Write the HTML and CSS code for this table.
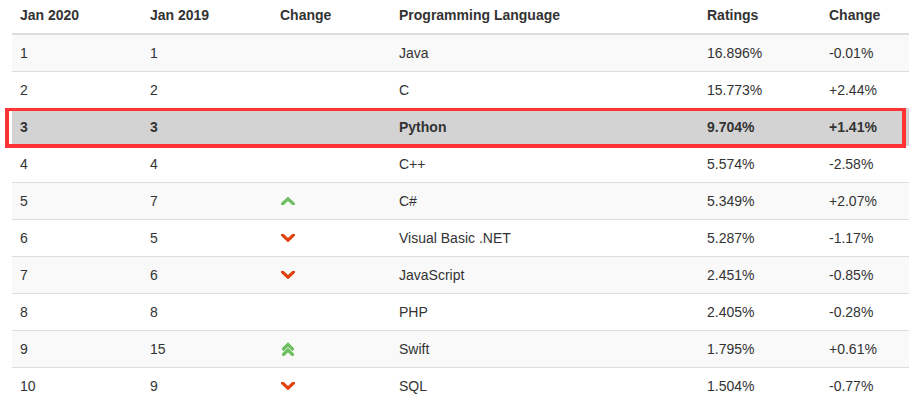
FILE: index.html
```html
<!DOCTYPE html>
<html lang="en">
<head>
    <meta charset="UTF-8">
    <title>TIOBE Index - January 2020</title>
    <link rel="stylesheet" href="styles.css">
</head>
<body>
    <div class="ranking">
        <table class="table table-striped">
            <colgroup>
                <col class="col-rank">
                <col class="col-rank">
                <col class="col-trend">
                <col class="col-lang">
                <col class="col-rating">
                <col>
            </colgroup>
            <thead>
                <tr>
                    <th>Jan 2020</th>
                    <th>Jan 2019</th>
                    <th>Change</th>
                    <th>Programming Language</th>
                    <th>Ratings</th>
                    <th>Change</th>
                </tr>
            </thead>
            <tbody>
                <tr><td>1</td><td>1</td><td></td><td>Java</td><td>16.896%</td><td>-0.01%</td></tr>
                <tr><td>2</td><td>2</td><td></td><td>C</td><td>15.773%</td><td>+2.44%</td></tr>
                <tr class="highlight"><td>3</td><td>3</td><td></td><td>Python</td><td>9.704%</td><td>+1.41%</td></tr>
                <tr><td>4</td><td>4</td><td></td><td>C++</td><td>5.574%</td><td>-2.58%</td></tr>
                <tr>
                    <td>5</td><td>7</td>
                    <td><svg class="trend up" viewBox="0 0 14 8"><path d="M1.5 7 L7 1.8 L12.5 7"/></svg></td>
                    <td>C#</td><td>5.349%</td><td>+2.07%</td>
                </tr>
                <tr>
                    <td>6</td><td>5</td>
                    <td><svg class="trend down" viewBox="0 0 14 8"><path d="M1.5 1 L7 6.2 L12.5 1"/></svg></td>
                    <td>Visual Basic .NET</td><td>5.287%</td><td>-1.17%</td>
                </tr>
                <tr>
                    <td>7</td><td>6</td>
                    <td><svg class="trend down" viewBox="0 0 14 8"><path d="M1.5 1 L7 6.2 L12.5 1"/></svg></td>
                    <td>JavaScript</td><td>2.451%</td><td>-0.85%</td>
                </tr>
                <tr><td>8</td><td>8</td><td></td><td>PHP</td><td>2.405%</td><td>-0.28%</td></tr>
                <tr>
                    <td>9</td><td>15</td>
                    <td><svg class="trend up double" viewBox="0 0 12 14"><path d="M1.5 7 L6 2.5 L10.5 7"/><path d="M1.5 12.5 L6 8 L10.5 12.5"/></svg></td>
                    <td>Swift</td><td>1.795%</td><td>+0.61%</td>
                </tr>
                <tr>
                    <td>10</td><td>9</td>
                    <td><svg class="trend down" viewBox="0 0 14 8"><path d="M1.5 1 L7 6.2 L12.5 1"/></svg></td>
                    <td>SQL</td><td>1.504%</td><td>-0.77%</td>
                </tr>
            </tbody>
        </table>
        <div class="marker"></div>
    </div>
</body>
</html>
```

FILE: styles.css
```css
* {
    box-sizing: border-box;
}

body {
    margin: 0;
    background: #ffffff;
    color: #333333;
    font-family: 'Liberation Sans', Arial, sans-serif;
    font-size: 14px;
    line-height: 20px;
}

.ranking {
    position: relative;
    padding-left: 12px;
}

.table {
    width: 897px;
    border-collapse: collapse;
    border-spacing: 0;
    table-layout: fixed;
}

.col-rank {
    width: 130px;
}

.col-trend {
    width: 119px;
}

.col-lang {
    width: 308px;
}

.col-rating {
    width: 122px;
}

.table th {
    text-align: left;
    font-weight: 700;
    padding: 5px 8px 8px;
    border-bottom: 2px solid #dddddd;
}

.table td {
    padding: 8px;
    height: 37px;
    border-top: 1px solid #dddddd;
    vertical-align: middle;
}

.table tbody tr:first-child td {
    border-top: 0;
    height: 36px;
}

.table-striped tbody tr:nth-child(odd) {
    background: #f9f9f9;
}

.table tbody tr.highlight {
    background: #d3d3d3;
    font-weight: 700;
}

.trend {
    display: block;
    width: 14px;
    height: 8px;
    margin-left: 1px;
    fill: none;
    stroke-width: 3.2;
    stroke-linecap: square;
}

.trend.double {
    width: 12px;
    height: 14px;
    margin-left: 2px;
}

.trend.up {
    stroke: #6cbf5e;
}

.trend.down {
    stroke: #e0420f;
}

.marker {
    position: absolute;
    left: 5px;
    top: 108px;
    width: 901px;
    height: 40px;
    border: 4px solid #ff3333;
    border-top-width: 3px;
}
```
